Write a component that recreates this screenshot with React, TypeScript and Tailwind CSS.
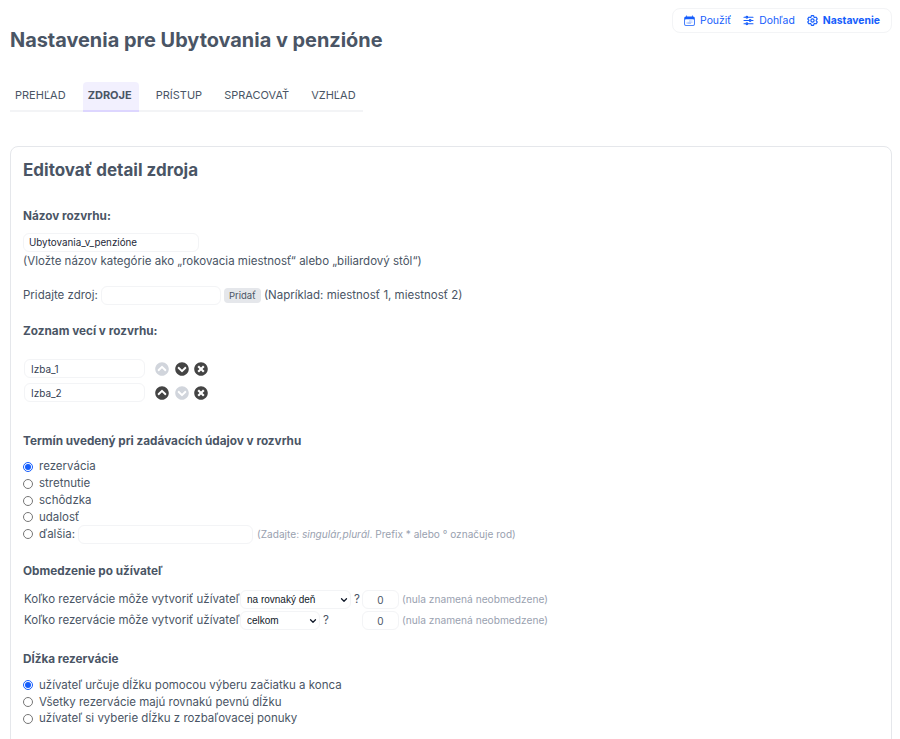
import { ChevronDown } from 'lucide-react';
import { FaChevronCircleDown, FaChevronCircleUp, FaTimesCircle } from 'react-icons/fa';
import { HiCalendarDays, HiOutlineAdjustmentsHorizontal, HiOutlineCog6Tooth } from 'react-icons/hi2';

const tabs = ['PREHĽAD', 'ZDROJE', 'PRÍSTUP', 'SPRACOVAŤ', 'VZHĽAD'];

function Radio({ checked, label, name }: { checked?: boolean; label: string; name: string }) {
  return (
    <label className="flex h-[16.8px] items-center gap-[6px]">
      <input type="radio" name={name} defaultChecked={checked} className="m-0 size-[10px] accent-blue-600" />
      <span>{label}</span>
    </label>
  );
}

function Select({ value, width }: { value: string; width: string }) {
  return (
    <div className={`relative h-[19px] ${width}`}>
      <select defaultValue={value} className="h-full w-full appearance-none rounded-md border border-gray-100 bg-white pl-[6px] font-['Liberation_Sans',sans-serif] text-[10px] text-gray-900">
        <option>{value}</option>
      </select>
      <ChevronDown className="absolute top-[5px] right-[2px] size-[10px] text-gray-900" strokeWidth={3} />
    </div>
  );
}

function ResourceRow({ name, up, down }: { name: string; up: boolean; down: boolean }) {
  return (
    <div className="flex items-center gap-[10px] pl-[1px]">
      <input defaultValue={name} className="h-[19px] w-[121px] rounded-md border border-gray-100 bg-white pl-[6px] text-[10px] text-gray-700" />
      <div className="flex items-center gap-[5.5px] text-[14px]">
        <FaChevronCircleUp className={up ? 'text-[#444]' : 'text-gray-300'} />
        <FaChevronCircleDown className={down ? 'text-[#444]' : 'text-gray-300'} />
        <FaTimesCircle className="text-[#444]" />
      </div>
    </div>
  );
}

export default function App() {
  return (
    <div className="h-[739px] overflow-hidden bg-white pr-[8px] pl-[10px] font-['Inter',sans-serif] text-[11.5px] text-gray-600">
      <div className="flex items-start justify-between pt-2">
        <h1 className="pt-5 text-[19.9px] leading-6 font-bold text-gray-600">Nastavenia pre Ubytovania v penzióne</h1>
        <nav className="flex h-[25px] items-center gap-[11px] rounded-lg border border-gray-100 pr-[11px] pl-[10px] text-[10.4px] text-blue-600">
          <a className="flex items-center gap-[4px]"><HiCalendarDays className="size-[13px]" />Použiť</a>
          <a className="flex items-center gap-[4px]"><HiOutlineAdjustmentsHorizontal className="size-[13px]" strokeWidth={2.2} />Dohľad</a>
          <a className="flex items-center gap-[4px] font-bold"><HiOutlineCog6Tooth className="size-[13px]" strokeWidth={2.2} />Nastavenie</a>
        </nav>
      </div>

      <ul className="mt-[30px] flex w-[353px] gap-[12px] border-b-2 border-gray-100 text-[11px] text-gray-600">
        {tabs.map((tab) => (
          <li key={tab} className={tab === 'ZDROJE' ? '-mb-[2px] rounded-t border-b-2 border-violet-200 bg-violet-100/70 pt-[5px] pr-[7px] pb-[6px] pl-[5px] font-bold' : 'px-[5px] pt-[5px] pb-[6px]'}>
            {tab}
          </li>
        ))}
      </ul>

      <section className="mt-[34px] rounded-lg border border-gray-200 px-3 pt-[13px] pb-8">
        <h2 className="text-[17px] leading-5 font-bold">Editovať detail zdroja</h2>

        <h3 className="mt-[28px] text-[11.75px] font-bold">Názov rozvrhu:</h3>
        <input defaultValue="Ubytovania_v_penzióne" className="mt-[8px] block h-[19px] w-[176px] rounded-md border border-gray-100 bg-white pl-[5px] text-[9.8px] text-gray-800" />
        <p className="mt-[1px]">(Vložte názov kategórie ako „rokovacia miestnosť“ alebo „biliardový stôl“)</p>

        <div className="mt-[16px] flex items-center gap-[3px]">
          <span>Pridajte zdroj:</span>
          <input className="h-[19px] w-[120px] rounded-md border border-gray-100 bg-white" />
          <button className="h-[15px] w-[37px] rounded-sm bg-gray-200 text-[9.5px]">Pridať</button>
          <span>(Napríklad: miestnosť 1, miestnosť 2)</span>
        </div>

        <h3 className="mt-[18px] text-[11.75px] font-bold">Zoznam vecí v rozvrhu:</h3>
        <div className="mt-[18px] flex flex-col gap-[5px]">
          <ResourceRow name="Izba_1" up={false} down />
          <ResourceRow name="Izba_2" up down={false} />
        </div>

        <h3 className="mt-[31px] text-[11.75px] font-bold">Termín uvedený pri zadávacích údajov v rozvrhu</h3>
        <div className="mt-[8px]">
          <Radio checked name="term" label="rezervácia" />
          <Radio name="term" label="stretnutie" />
          <Radio name="term" label="schôdzka" />
          <Radio name="term" label="udalosť" />
          <label className="flex h-[17px] items-center gap-[6px]">
            <input type="radio" name="term" className="m-0 size-[10px] accent-blue-600" />
            <span>ďalšia:</span>
            <input className="-ml-[3px] h-[19px] w-[175px] rounded-md border border-gray-100 bg-white" />
            <span className="-ml-[2px] text-[10.1px] text-gray-400">(Zadajte: <em>singulár,plurál</em>. Prefix * alebo ° označuje rod)</span>
          </label>
        </div>

        <h3 className="mt-[20px] text-[11.75px] font-bold">Obmedzenie po užívateľ</h3>
        <div className="mt-[10px] flex flex-col gap-[2px] pl-[1px]">
          <div className="flex items-center gap-[3px]">
            <span className="w-[213px] whitespace-nowrap">Koľko rezervácie môže vytvoriť užívateľ</span>
            <Select value="na rovnaký deň" width="w-[111px]" />
            <span className="w-[5px]">?</span>
            <input defaultValue="0" className="h-[19px] w-[37px] rounded-md border border-gray-100 text-center text-[10px]" />
            <span className="text-[10.2px] text-gray-400">(nula znamená neobmedzene)</span>
          </div>
          <div className="flex items-center gap-[3px]">
            <span className="w-[213px] whitespace-nowrap">Koľko rezervácie môže vytvoriť užívateľ</span>
            <Select value="celkom" width="w-[80px]" />
            <span className="w-[36px]">?</span>
            <input defaultValue="0" className="h-[19px] w-[37px] rounded-md border border-gray-100 text-center text-[10px]" />
            <span className="text-[10.2px] text-gray-400">(nula znamená neobmedzene)</span>
          </div>
        </div>

        <h3 className="mt-[21px] text-[11.75px] font-bold">Dĺžka rezervácie</h3>
        <div className="mt-[8px]">
          <Radio checked name="len" label="užívateľ určuje dĺžku pomocou výberu začiatku a konca" />
          <Radio name="len" label="Všetky rezervácie majú rovnakú pevnú dĺžku" />
          <Radio name="len" label="užívateľ si vyberie dĺžku z rozbaľovacej ponuky" />
        </div>
      </section>
    </div>
  );
}
